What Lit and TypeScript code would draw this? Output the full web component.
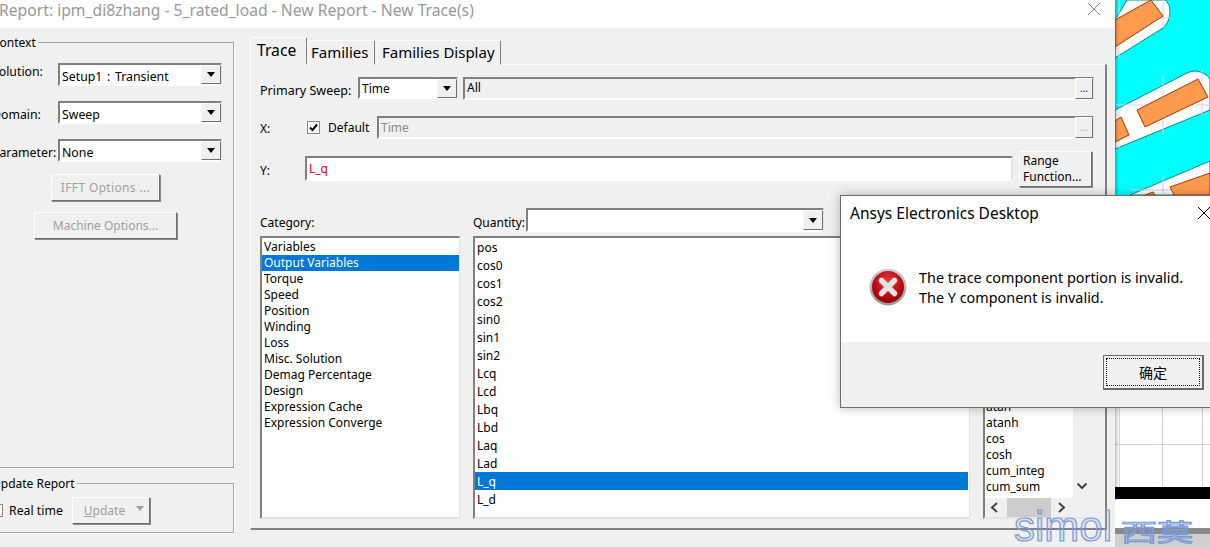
import { LitElement, html, css, svg } from "lit";
import { customElement } from "lit/decorators.js";

const categories = ["Variables","Output Variables","Torque","Speed","Position","Winding","Loss","Misc. Solution","Demag Percentage","Design","Expression Cache","Expression Converge"];
const quantities = ["pos","cos0","cos1","cos2","sin0","sin1","sin2","Lcq","Lcd","Lbq","Lbd","Laq","Lad","L_q","L_d"];
const functions = ["asin","asinh","atan","atanh","cos","cosh","cum_integ","cum_sum"];

const arrow = html`<span class="drop"><i></i></span>`;

@customElement("app-root")
export class AppRoot extends LitElement {
  static styles = css`
    :host { display:block; position:relative; width:1210px; height:547px; overflow:hidden; background:#fff; font-family:"Noto Sans","Open Sans",sans-serif; font-size:12px; color:#000; }
    * { box-sizing:border-box; }
    .desk { display:flex; width:1210px; height:547px; }
    .dlg { width:1115px; flex:none; display:flex; flex-direction:column; overflow:hidden; }
    .title { height:28px; flex:none; background:#fff; color:#999; font-size:15.7px; line-height:21px; margin-left:-1px; display:flex; justify-content:space-between; white-space:nowrap; }
    .title svg { margin:2px 14px 0 0; }
    .client { flex:1; background:#f0f0f0; display:flex; overflow:hidden; }
    .left { flex:none; width:246px; margin-left:-12px; padding-top:14px; display:flex; flex-direction:column; gap:15px; }
    .group { border:1px solid #a6a6a6; box-shadow:1px 1px 0 #fff; padding:0 11px 0 3px; display:flex; flex-direction:column; }
    .g1 { height:426px; }
    .g2 { height:50px; }
    .legend { align-self:flex-start; margin-top:-9px; background:#f0f0f0; line-height:17px; padding-right:2px; white-space:nowrap; }
    .form { display:grid; grid-template-columns:66px 164px; grid-auto-rows:23px; row-gap:15px; margin-top:12px; font-size:12.3px; }
    .form label { white-space:nowrap; height:23px; line-height:28px; }
    .form label.first { line-height:18px; }
    .combo { height:23px; border:2px solid; border-color:#808080 #e4e4e4 #fff #808080; background:#fff; display:flex; align-items:center; padding-left:2px; position:relative; white-space:nowrap; word-spacing:1.5px; }
    .combo span.txt { flex:1; line-height:18px; padding-top:4px; }
    .drop { width:20px; height:19px; flex:none; background:#f0f0f0; border:1px solid; border-color:#f8f8f8 #707070 #707070 #f8f8f8; display:flex; align-items:center; justify-content:center; margin-right:-1px; }
    .drop i { width:0; height:0; border:4.5px solid transparent; border-top:5px solid #000; border-bottom:0; }
    .btn { background:#f0f0f0; border:1px solid; border-color:#fff #6e6e6e #6e6e6e #fff; box-shadow:1px 1px 0 #8a8a8a; color:#000; display:flex; align-items:center; justify-content:center; white-space:nowrap; }
    .btn.off { color:#a0a0a0; }
    .ifft { width:109px; height:27px; align-self:center; margin:12px 3px 0 0; letter-spacing:.35px; }
    .mach { width:143px; height:27px; align-self:center; margin:11px 3px 0 0; }
    .update-row { display:flex; align-items:center; margin-top:5px; }
    .update-row .cb { margin-left:-2px; }
    .cb { width:13px; height:13px; flex:none; background:#fff; border:1px solid #8a8a8a; display:flex; align-items:center; justify-content:center; }
    .rt { margin-left:6px; width:63px; white-space:nowrap; font-size:12.3px; }
    .upd { width:78px; height:27px; gap:11px; padding-left:6px; }
    .upd u { text-decoration:underline; }
    .upd i { width:0; height:0; border:4.5px solid transparent; border-top:5px solid #a0a0a0; border-bottom:0; margin-top:-5px; }
    .right { flex:none; width:857px; margin-left:16px; padding-top:10px; display:flex; flex-direction:column; }
    .tabs { display:flex; height:27px; align-items:flex-end; font-size:15px; position:relative; z-index:1; margin-bottom:-1px; }
    .tab { height:25px; background:#f0f0f0; border:1px solid; border-color:#fff #808080 transparent #fff; line-height:23px; padding:0 4px; white-space:nowrap; margin-right:2px; border-radius:2px 2px 0 0; }
    .tab.on { height:28px; padding:0 0 0 6px; width:57px; line-height:24px; margin-right:1px; border-bottom-color:#f0f0f0; font-size:15.7px; }
    .t2 { width:67px; padding-left:2px; }
    .t3 { width:124px; }
    .pane { height:466px; border:1px solid; border-color:#fff #808080 #808080 #fff; border-width:1px 2px 2px 1px; padding:12px 0 0 9px; display:flex; flex-direction:column; position:relative; }
    .row { display:flex; align-items:center; flex:none; white-space:nowrap; }
    .r1 { height:23px; }
    .r1 .lb { width:98px; padding-top:3px; font-size:12.5px; }
    .r1 .combo { width:100px; margin-right:5px; height:22px; align-self:flex-start; }
    .r1 .combo span.txt { padding-top:2px; }
    .r2 { height:23px; margin-top:16px; }
    .r2 .lb { width:47px; padding-top:1px; }
    .r2 .dft { margin:0 8px; width:41px; }
    .sunk { border:2px solid; border-color:#808080 #e4e4e4 #fff #808080; height:23px; display:flex; align-items:center; padding-left:2px; background:#f0f0f0; }
    .f1 { width:631px; }
    .f2 { width:717px; color:#8a8a8a; padding-left:2px; }
    .sunk b { font-weight:400; flex:1; line-height:14px; margin-top:-1px; }
    .f2 b { margin-top:0; }
    .dots { width:18px; height:21px; flex:none; background:#f0f0f0; border:1px solid; border-color:#fff #707070 #707070 #fff; display:flex; justify-content:center; align-items:center; font-size:10px; line-height:10px; color:#0000d0; margin:-1px -1px 0 0; }
    .dots.off { color:#a0a0a0; }
    .r3 { height:37px; margin-top:11px; }
    .r3 .lb { width:45px; padding-top:4px; }
    .yin { width:708px; height:25px; background:#fff; color:#e0002a; padding-left:2px; margin-right:6px; }
    .yin b { margin-top:0; }
    .range { width:73px; height:36px; justify-content:flex-start; padding:0 0 0 3px; line-height:16px; white-space:normal; }
    .lists { display:grid; grid-template-columns:200px 497px 110px; column-gap:13px; grid-template-rows:24px 283px; row-gap:4px; margin-top:21px; }
    .hd { display:flex; align-items:center; white-space:nowrap; }
    .hd.cat { padding-top:5px; }
    .hd .q { width:53px; padding-top:5px; flex:none; }
    .hd .combo { width:298px; height:24px; }
    .hd .combo .drop { height:20px; }
    .list { border:2px solid; border-color:#808080 #e4e4e4 #e4e4e4 #808080; border-right-width:1px; background:#fff; overflow:hidden; }
    .list div { white-space:nowrap; }
    .cats { padding:1px 0 0 0; }
    .cats div { height:16px; line-height:16px; padding-left:2px; }
    .qs div { height:18px; line-height:20px; padding-left:2px; margin-right:0; }
    .qs { padding-right:1px; }
    .sel { background:#0078d7; color:#fff; }
    .fn { background:#f0f0f0; display:flex; flex-direction:column; border-right:0; position:relative; }
    .fnv { height:260px; width:88px; background:#fff; display:flex; flex-direction:column; justify-content:flex-end; overflow:hidden; padding-bottom:3px; flex:none; }
    .fnv div { height:16px; line-height:16px; padding-left:1px; }
    .hbar { height:19px; display:flex; align-items:center; width:88px; }
    .hbar svg { flex:none; }
    .thumb { width:44px; height:19px; background:#cdcdcd; margin:0 5px 0 2px; }
    .chev { position:absolute; left:91px; top:244px; }
    .canvas { flex:1; display:block; width:95px; height:547px; }
    .alert { position:absolute; left:840px; top:195px; width:376px; height:213px; background:#fff; border:1px solid #6d6d6d; box-shadow:0 0 10px rgba(0,0,0,.28); display:flex; flex-direction:column; }
    .a-title { height:33px; flex:none; display:flex; justify-content:space-between; align-items:center; padding-left:9px; font-size:15.5px; }
    .a-title svg { margin:0 3px 0 0; }
    .a-body { height:113px; flex:none; display:flex; align-items:flex-start; padding:16px 0 0 28px; font-size:14.4px; line-height:20px; }
    .a-body svg { flex:none; margin:23px 12px 0 0; }
    .a-msg { margin-top:23px; white-space:nowrap; }
    .a-foot { flex:1; background:#f0f0f0; padding:13px 0 0 262px; }
    .ok { width:101px; height:35px; background:#f0f0f0; border:1px solid #6a6a6a; border-width:1px 2px 2px 1px; padding:2px; }
    .ok span { display:flex; width:100%; height:100%; border:1px dotted #000; align-items:center; justify-content:center; font:14px "Noto Sans CJK SC","Noto Sans",sans-serif; }
    .wm { position:absolute; left:1014px; top:505px; display:flex; align-items:baseline; color:rgba(120,160,225,.18); -webkit-text-stroke:1.2px #7a9ad6; white-space:nowrap; pointer-events:none; }
    .wm .en { font:42px/44px "Liberation Sans",sans-serif; }
    .wm .cn { font:24px/44px "Noto Sans CJK SC",sans-serif; transform:scaleX(1.5); transform-origin:left center; margin-left:9px; }
  `;

  canvas() {
    const orange = "#fd9a4e", edge = "#a83a00", teal = "#008a8a", gl = "#d4d0ea";
    return html`<svg class="canvas" viewBox="1115 0 95 547" width="95" height="547">
      ${svg`
      <defs><linearGradient id="sh" x1="0" x2="1" y1="0" y2="0"><stop offset="0" stop-color="#000" stop-opacity=".25"/><stop offset="1" stop-color="#000" stop-opacity="0"/></linearGradient></defs>
      <rect x="1115" y="0" width="95" height="195" fill="#00ffff"/>
      <path d="M1127 0H1166Q1171 6 1170 13Q1169 23 1163 28L1115 58V20Z" fill="#fff" stroke="${teal}"/>
      <path d="M1115 110L1187 73Q1195 69 1203 73Q1208 75 1210 79V110L1115 149Z" fill="#fff" stroke="${teal}"/>
      <path d="M1130 195L1210 161V195Z" fill="#fff" stroke="${teal}"/>
      <path d="M1119 0V58M1163 0V28M1115 18H1170M1163 75V135M1115 105H1210M1202 70V115M1119 110V148M1130 190H1210M1163 175V195" stroke="${gl}" fill="none"/>
      <path d="M1115 20L1151 0L1163 16L1115 47Z" fill="${orange}" stroke="${edge}"/>
      <path d="M1137 110L1198 79L1208 97L1145 127Z" fill="${orange}" stroke="${edge}"/>
      <path d="M1115 121L1121 117L1129 135L1115 142Z" fill="${orange}" stroke="${edge}"/>
      <path d="M1170 187L1210 173V195H1174Z" fill="${orange}" stroke="${edge}"/>
      <path d="M1145 195L1153 192L1155 195Z" fill="${orange}" stroke="${edge}"/>
      <rect x="1115" y="195" width="95" height="292" fill="#fff"/>
      <path d="M1119.5 400V487M1162.5 400V487M1202.5 400V487M1115 444.5H1210" stroke="${gl}" fill="none"/>
      <rect x="1115" y="487" width="95" height="12" fill="#000"/>
      <rect x="1115" y="528" width="95" height="6" fill="#8a8a8a"/>
      <rect x="1115" y="534" width="95" height="13" fill="#cfcfcf"/>
      <rect x="1115" y="0" width="4" height="500" fill="url(#sh)"/>
      `}
    </svg>`;
  }

  render() {
    return html`
      <div class="desk">
        <div class="dlg">
          <div class="title"><span>Report: ipm_di8zhang - 5_rated_load - New Report - New Trace(s)</span>
            <svg width="14" height="14" viewBox="0 0 14 14"><path d="M1 1L13 13M13 1L1 13" stroke="#8c8c8c" stroke-width="1" fill="none"/></svg></div>
          <div class="client">
            <div class="left">
              <div class="group g1">
                <div class="legend">Context</div>
                <div class="form">
                  <label class="first">Solution:</label><div class="combo"><span class="txt">Setup1 : Transient</span>${arrow}</div>
                  <label>Domain:</label><div class="combo"><span class="txt">Sweep</span>${arrow}</div>
                  <label>Parameter:</label><div class="combo"><span class="txt">None</span>${arrow}</div>
                </div>
                <div class="btn off ifft">IFFT Options ...</div>
                <div class="btn off mach">Machine Options...</div>
              </div>
              <div class="group g2">
                <div class="legend">Update Report</div>
                <div class="update-row">
                  <span class="cb"></span><span class="rt">Real time</span>
                  <div class="btn off upd"><span><u>U</u>pdate</span><i></i></div>
                </div>
              </div>
            </div>
            <div class="right">
              <div class="tabs">
                <div class="tab on">Trace</div><div class="tab t2">Families</div><div class="tab t3">Families Display</div>
              </div>
              <div class="pane">
                <div class="row r1"><span class="lb">Primary Sweep:</span>
                  <div class="combo"><span class="txt">Time</span>${arrow}</div>
                  <div class="sunk f1"><b>All</b><span class="dots">...</span></div></div>
                <div class="row r2"><span class="lb">X:</span>
                  <span class="cb"><svg width="11" height="11" viewBox="0 0 11 11"><path d="M2 5.500L4.500 8L9 2.500" stroke="#000" stroke-width="2" fill="none"/></svg></span>
                  <span class="dft">Default</span>
                  <div class="sunk f2"><b>Time</b><span class="dots off">...</span></div></div>
                <div class="row r3"><span class="lb">Y:</span>
                  <div class="sunk yin"><b>L_q</b></div>
                  <div class="btn range"><span>Range<br />Function...</span></div></div>
                <div class="lists">
                  <div class="hd cat">Category:</div>
                  <div class="hd"><span class="q">Quantity:</span><div class="combo"><span class="txt"></span>${arrow}</div></div>
                  <div></div>
                  <div class="list cats">${categories.map(c => html`<div class=${c === "Output Variables" ? "sel" : ""}>${c}</div>`)}</div>
                  <div class="list qs">${quantities.map(c => html`<div class=${c === "L_q" ? "sel" : ""}>${c}</div>`)}</div>
                  <div class="list fn">
                    <div class="fnv">${functions.map(c => html`<div>${c}</div>`)}</div>
                    <div class="hbar">
                      <svg width="20" height="19" viewBox="0 0 20 19"><path d="M12 5L7 9.500L12 14" stroke="#444" stroke-width="2" fill="none"/></svg>
                      <div class="thumb"></div>
                      <svg width="17" height="19" viewBox="0 0 17 19"><path d="M3 5L8 9.500L3 14" stroke="#444" stroke-width="2" fill="none"/></svg>
                    </div>
                    <svg class="chev" width="12" height="8" viewBox="0 0 12 8"><path d="M1.500 1.500L6 6L10.500 1.500" stroke="#444" stroke-width="2" fill="none"/></svg>
                  </div>
                </div>
              </div>
            </div>
          </div>
        </div>
        ${this.canvas()}
      </div>
      <div class="alert">
        <div class="a-title"><span>Ansys Electronics Desktop</span>
          <svg width="20" height="14" viewBox="0 0 20 14"><path d="M6 1L18 13M18 1L6 13" stroke="#000" stroke-width="1" fill="none"/></svg></div>
        <div class="a-body">
          <svg width="38" height="38" viewBox="0 0 38 38">
            <defs>
              <radialGradient id="er" cx=".5" cy=".35" r=".7"><stop offset="0" stop-color="#e8454a"/><stop offset=".6" stop-color="#bb0a10"/><stop offset="1" stop-color="#8c0006"/></radialGradient>
              <linearGradient id="rg" x1="0" x2="0" y1="0" y2="1"><stop offset="0" stop-color="#d0d0d0"/><stop offset="1" stop-color="#9a9a9a"/></linearGradient>
            </defs>
            <circle cx="19" cy="19" r="18.500" fill="url(#rg)"/>
            <circle cx="19" cy="19" r="16" fill="url(#er)"/>
            <path d="M12.500 12.500L25.500 25.500M25.500 12.500L12.500 25.500" stroke="#e4e4e4" stroke-width="5.500" stroke-linecap="round"/>
          </svg>
          <div class="a-msg">The trace component portion is invalid.<br />The Y component is invalid.</div>
        </div>
        <div class="a-foot"><div class="ok"><span>确定</span></div></div>
      </div>
      <div class="wm"><span class="en">simol</span><span class="cn">西莫</span></div>
    `;
  }
}
